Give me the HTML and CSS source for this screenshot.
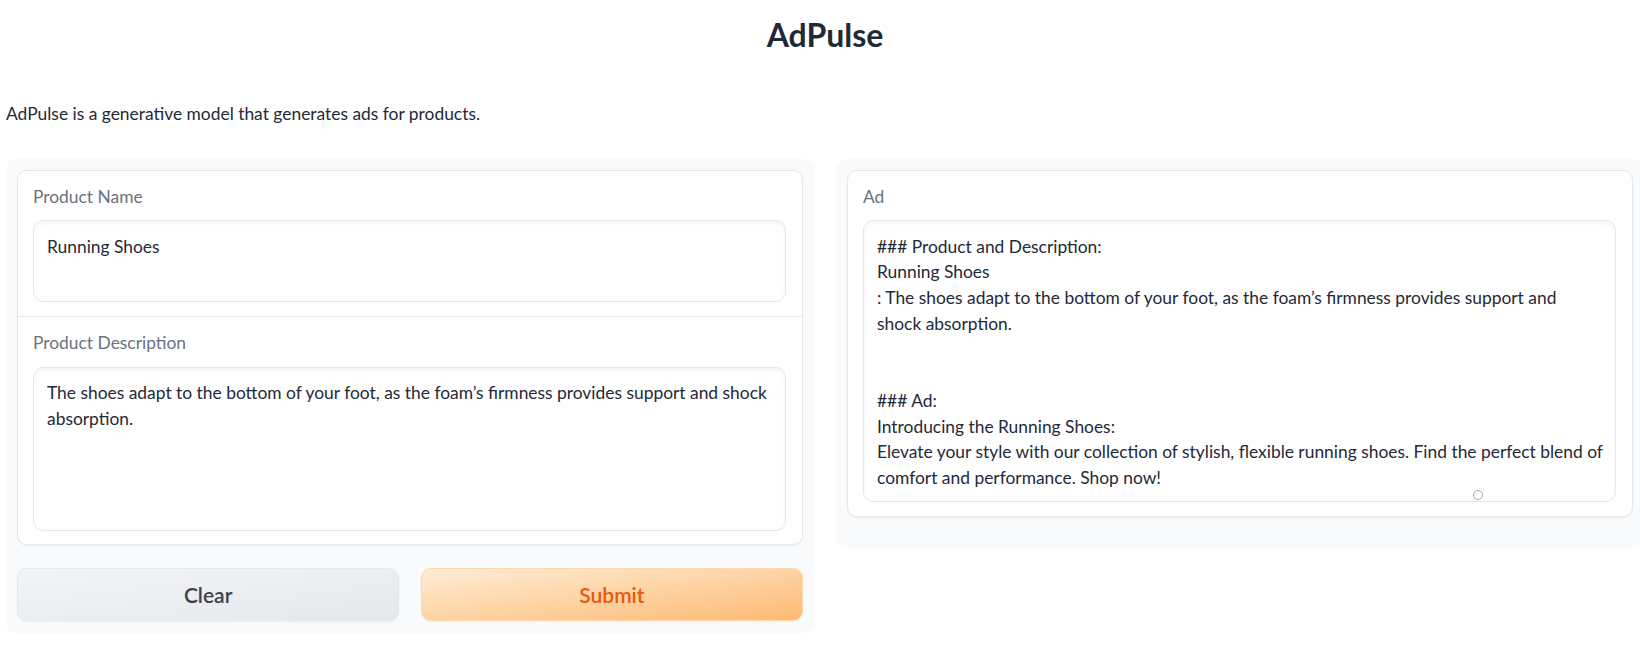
FILE: index.html
```html
<!DOCTYPE html>
<html lang="en">
<head>
<meta charset="utf-8">
<title>AdPulse</title>
<link rel="stylesheet" href="styles.css">
</head>
<body>
<div class="app">
  <h1 class="title">AdPulse</h1>
  <p class="desc">AdPulse is a generative model that generates ads for products.</p>
  <div class="row">
    <div class="panel">
      <div class="card">
        <div class="block">
          <label class="label">Product Name</label>
          <textarea class="input name" wrap="off" readonly>Running Shoes</textarea>
        </div>
        <div class="block divided">
          <label class="label">Product Description</label>
          <textarea class="input descr" wrap="off" readonly>The shoes adapt to the bottom of your foot, as the foam’s firmness provides support and shock
absorption.</textarea>
        </div>
      </div>
      <div class="buttons">
        <button class="btn secondary">Clear</button>
        <button class="btn primary">Submit</button>
      </div>
    </div>
    <div class="panel out">
      <div class="card">
        <div class="block">
          <label class="label">Ad</label>
          <div class="output-wrap">
            <textarea class="input output" wrap="off" readonly>### Product and Description:
Running Shoes
: The shoes adapt to the bottom of your foot, as the foam’s firmness provides support and
shock absorption.


### Ad:
Introducing the Running Shoes:
Elevate your style with our collection of stylish, flexible running shoes. Find the perfect blend of
comfort and performance. Shop now!</textarea>
            <span class="spinner"></span>
          </div>
        </div>
      </div>
    </div>
  </div>
</div>
</body>
</html>
```

FILE: styles.css
```css
html, body {
  margin: 0;
  padding: 0;
  background: #ffffff;
  overflow: hidden;
}

body {
  font-family: "Lato", "Noto Sans", "Liberation Sans", sans-serif;
  color: #1f2937;
}

.app {
  width: 1638px;
  margin-left: 6px;
  padding-top: 15px;
  box-sizing: border-box;
}

.title {
  margin: 0;
  text-align: center;
  font-size: 32px;
  line-height: 40px;
  font-weight: 700;
  color: #1f2937;
}

.desc {
  margin: 46px 0 0 0;
  font-size: 17.4px;
  line-height: 26px;
  color: #1f2937;
}

.row {
  display: flex;
  gap: 22px;
  align-items: flex-start;
  margin-top: 32px;
}

.panel {
  flex: 1 1 0;
  background: #f9fafb;
  border-radius: 10px;
  padding: 11px 11px 11.7px 11px;
  display: flex;
  flex-direction: column;
  gap: 22.8px;
}

.panel.out {
  padding-bottom: 31.6px;
}

.card {
  background: #ffffff;
  border: 1px solid #e5e7eb;
  border-radius: 10px;
  box-shadow: 0 1px 2px rgba(0, 0, 0, 0.05);
  overflow: hidden;
}

.block {
  display: flex;
  flex-direction: column;
  padding: 12.8px 16px 13.7px 15px;
}

.block.divided {
  border-top: 1px solid #e5e7eb;
  padding-top: 13.8px;
  padding-bottom: 13.5px;
}

.out .block {
  padding-bottom: 13.4px;
}

.label {
  display: block;
  font-size: 17.4px;
  line-height: 26px;
  color: #6b7280;
  margin-bottom: 10.2px;
}

.input {
  display: block;
  width: 100%;
  box-sizing: border-box;
  margin: 0;
  border: 1px solid #e5e7eb;
  border-radius: 10px;
  box-shadow: inset 0 2px 4px rgba(0, 0, 0, 0.05);
  background: #ffffff;
  font-family: "Lato", "Noto Sans", "Liberation Sans", sans-serif;
  font-size: 17.4px;
  line-height: 25.7px;
  color: #1f2937;
  padding: 12.7px 13px;
  resize: none;
  overflow: hidden;
  white-space: pre;
  outline: none;
}

.input.name {
  height: 82px;
}

.input.descr {
  height: 164.3px;
}

.output-wrap {
  position: relative;
}

.input.output {
  height: 282.3px;
}

.spinner {
  position: absolute;
  left: 610px;
  top: 270px;
  width: 8px;
  height: 8px;
  border: 1.3px solid #a3a8b4;
  border-radius: 50%;
}

.buttons {
  display: flex;
  gap: 21.5px;
}

.btn {
  flex: 1 1 0;
  height: 52.7px;
  border-radius: 10px;
  font-family: "Lato", "Noto Sans", "Liberation Sans", sans-serif;
  font-size: 21px;
  font-weight: 600;
  box-shadow: 0 1px 2px rgba(0, 0, 0, 0.05);
  cursor: pointer;
}

.btn.secondary {
  background: linear-gradient(to bottom right, #f3f4f6, #e5e7eb);
  border: 1px solid #e5e7eb;
  color: #374151;
}

.btn.primary {
  background: linear-gradient(to bottom right, #ffedd5, #fdba74);
  border: 1px solid #fed7aa;
  color: #ea580c;
}
```
